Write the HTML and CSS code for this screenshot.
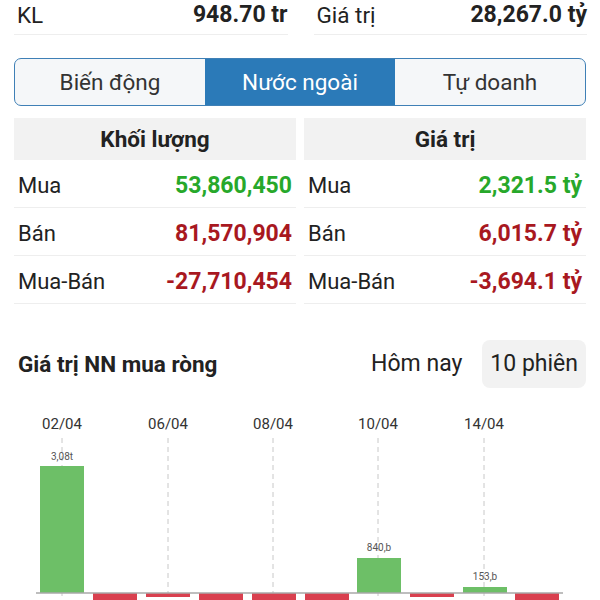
FILE: index.html
```html
<!DOCTYPE html>
<html lang="vi">
<head>
<meta charset="utf-8">
<title>Nước ngoài</title>
<link rel="stylesheet" href="styles.css">
</head>
<body>
<div class="summary">
    <div class="stat"><span>KL</span><b>948.70 tr</b></div>
    <div class="stat"><span>Giá trị</span><b>28,267.0 tỷ</b></div>
</div>

<div class="tabs">
    <div class="tab">Biến động</div>
    <div class="tab active">Nước ngoài</div>
    <div class="tab">Tự doanh</div>
</div>

<div class="board">
    <div class="col">
        <div class="col-head">Khối lượng</div>
        <div class="line"><span>Mua</span><b class="up">53,860,450</b></div>
        <div class="line"><span>Bán</span><b class="down">81,570,904</b></div>
        <div class="line"><span>Mua-Bán</span><b class="down">-27,710,454</b></div>
    </div>
    <div class="col">
        <div class="col-head">Giá trị</div>
        <div class="line"><span>Mua</span><b class="up">2,321.5 tỷ</b></div>
        <div class="line"><span>Bán</span><b class="down">6,015.7 tỷ</b></div>
        <div class="line"><span>Mua-Bán</span><b class="down">-3,694.1 tỷ</b></div>
    </div>
</div>

<div class="chart-head">
    <h2>Giá trị NN mua ròng</h2>
    <div class="switch">
        <span class="opt">Hôm nay</span>
        <span class="opt on">10 phiên</span>
    </div>
</div>

<svg class="chart" width="600" height="200" viewBox="0 400 600 200">
    <g class="dates">
        <text x="62" y="429">02/04</text>
        <text x="168" y="429">06/04</text>
        <text x="273" y="429">08/04</text>
        <text x="378" y="429">10/04</text>
        <text x="484" y="429">14/04</text>
    </g>
    <g class="grid">
        <line x1="62" y1="438" x2="62" y2="600"/>
        <line x1="168" y1="438" x2="168" y2="600"/>
        <line x1="273" y1="438" x2="273" y2="600"/>
        <line x1="378" y1="438" x2="378" y2="600"/>
        <line x1="484" y1="438" x2="484" y2="600"/>
    </g>
    <g class="bar-up">
        <rect x="40" y="466" width="44" height="127"/>
        <rect x="357" y="558" width="44" height="35"/>
        <rect x="463" y="587" width="44" height="6"/>
    </g>
    <g class="bar-down">
        <rect x="93" y="593" width="44" height="10"/>
        <rect x="146" y="593" width="44" height="4"/>
        <rect x="199" y="593" width="44" height="10"/>
        <rect x="252" y="593" width="44" height="10"/>
        <rect x="305" y="593" width="44" height="10"/>
        <rect x="410" y="593" width="44" height="4"/>
        <rect x="515" y="593" width="44" height="10"/>
    </g>
    <line class="axis" x1="36" y1="593" x2="563" y2="593"/>
    <g class="vals">
        <text x="62" y="460">3,08t</text>
        <text x="379" y="551">840,b</text>
        <text x="485" y="580">153,b</text>
    </g>
</svg>
</body>
</html>
```

FILE: styles.css
```css
body {
    margin: 0;
    font-family: Roboto, "Noto Sans", sans-serif;
    color: #222;
    background: #fff;
    overflow: hidden;
}

/* top summary row */
.summary {
    display: grid;
    grid-template-columns: 1fr 1fr;
    gap: 26px;
    padding: 0 13px 0 14px;
}

.stat {
    display: flex;
    justify-content: space-between;
    align-items: center;
    height: 33px;
    padding-bottom: 3px;
    border-bottom: 1px solid #eeeeee;
    font-size: 22.5px;
    line-height: 28px;
    margin-top: -4px;
    padding-top: 2px;
}

.stat span {
    padding-left: 3px;
}

.stat b {
    font-weight: 700;
    font-size: 23px;
}

/* tabs */
.tabs {
    display: flex;
    margin: 23px 14px 0;
    height: 46px;
    border: 1.5px solid #3f80b6;
    border-radius: 7px;
    overflow: hidden;
    background: #f5f7f9;
}

.tab {
    flex: 1;
    display: flex;
    align-items: center;
    justify-content: center;
    font-size: 22.5px;
    color: #333;
}

.tab.active {
    background: #2b7ab8;
    color: #fff;
}

/* volume / value table */
.board {
    display: grid;
    grid-template-columns: 1fr 1fr;
    gap: 8px;
    margin: 12px 14px 0;
}

.col-head {
    height: 42px;
    display: flex;
    align-items: center;
    justify-content: center;
    background: #f2f2f2;
    font-size: 22.5px;
    font-weight: 700;
}

.line {
    display: flex;
    justify-content: space-between;
    align-items: center;
    box-sizing: border-box;
    height: 48px;
    padding: 3px 4px 0;
    border-bottom: 1px solid #eeeeee;
    font-size: 22px;
}

.line b {
    font-weight: 700;
    font-size: 23px;
}

.up {
    color: #27a82a;
}

.down {
    color: #a8181f;
}

/* chart header */
.chart-head {
    display: flex;
    justify-content: space-between;
    align-items: center;
    margin-top: 36px;
    padding: 0 14px 0 18px;
}

.chart-head h2 {
    margin: 0;
    font-size: 22.5px;
    font-weight: 700;
}

.switch {
    display: flex;
    gap: 12px;
}

.opt {
    padding: 10px 8px;
    font-size: 23px;
    line-height: 28px;
    border-radius: 8px;
}

.opt.on {
    background: #f2f2f2;
}

/* chart */
.chart {
    display: block;
    margin-top: 12px;
}

.dates text {
    font-size: 15px;
    fill: #333;
    text-anchor: middle;
}

.grid line {
    stroke: #c8c8c8;
    stroke-width: 1;
    stroke-dasharray: 5 4;
}

.bar-up rect {
    fill: #6dbf67;
}

.bar-down rect {
    fill: #d9404f;
}

.axis {
    stroke: #a8a8a8;
    stroke-width: 1.5;
}

.vals text {
    font-size: 10px;
    fill: #555;
    text-anchor: middle;
}
```
